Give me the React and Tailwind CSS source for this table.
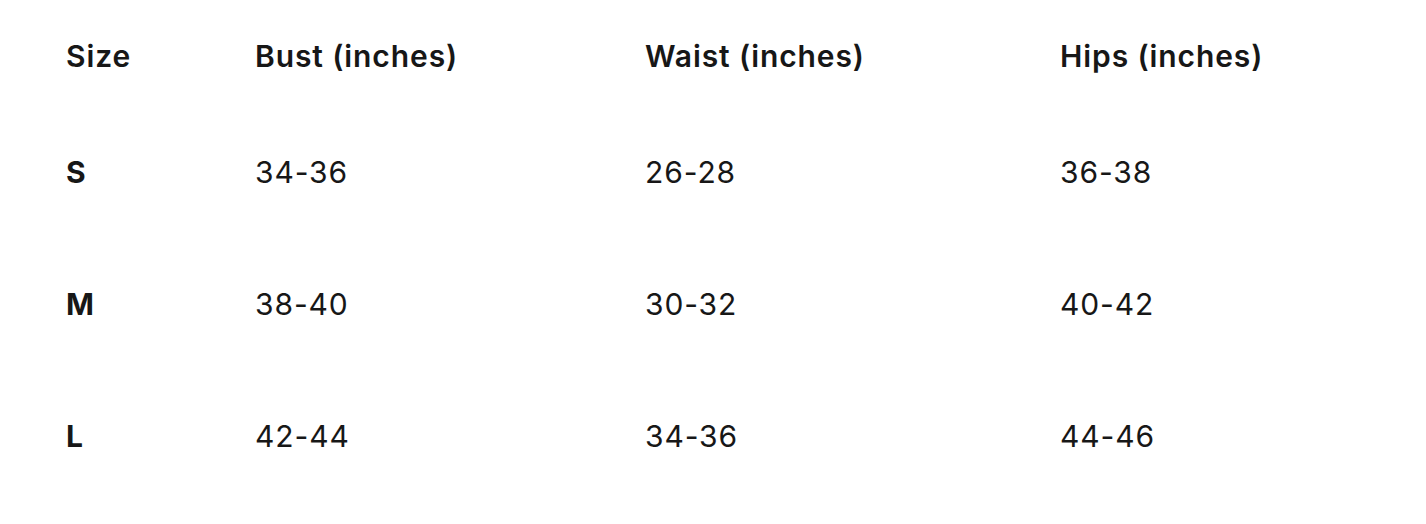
const HEAD = ['Size', 'Bust (inches)', 'Waist (inches)', 'Hips (inches)']

const ROWS = [
  ['S', '34-36', '26-28', '36-38'],
  ['M', '38-40', '30-32', '40-42'],
  ['L', '42-44', '34-36', '44-46']
]

export default function App() {
  return (
    <div className="min-h-screen bg-white text-[#171717] font-['Inter',sans-serif] pl-[66px] pt-[36px]">
      <div className="grid grid-cols-[189px_390px_415px_1fr] text-[30px] leading-[40px] tracking-[0.9px]">
        {HEAD.map(h => (
          <div key={h} className="font-semibold h-[116px]">{h}</div>
        ))}
        {ROWS.map(row =>
          row.map((cell, i) => (
            <div key={row[0] + i} className={`h-[132px] ${i === 0 ? 'font-bold' : ''}`}>{cell}</div>
          ))
        )}
      </div>
    </div>
  )
}
